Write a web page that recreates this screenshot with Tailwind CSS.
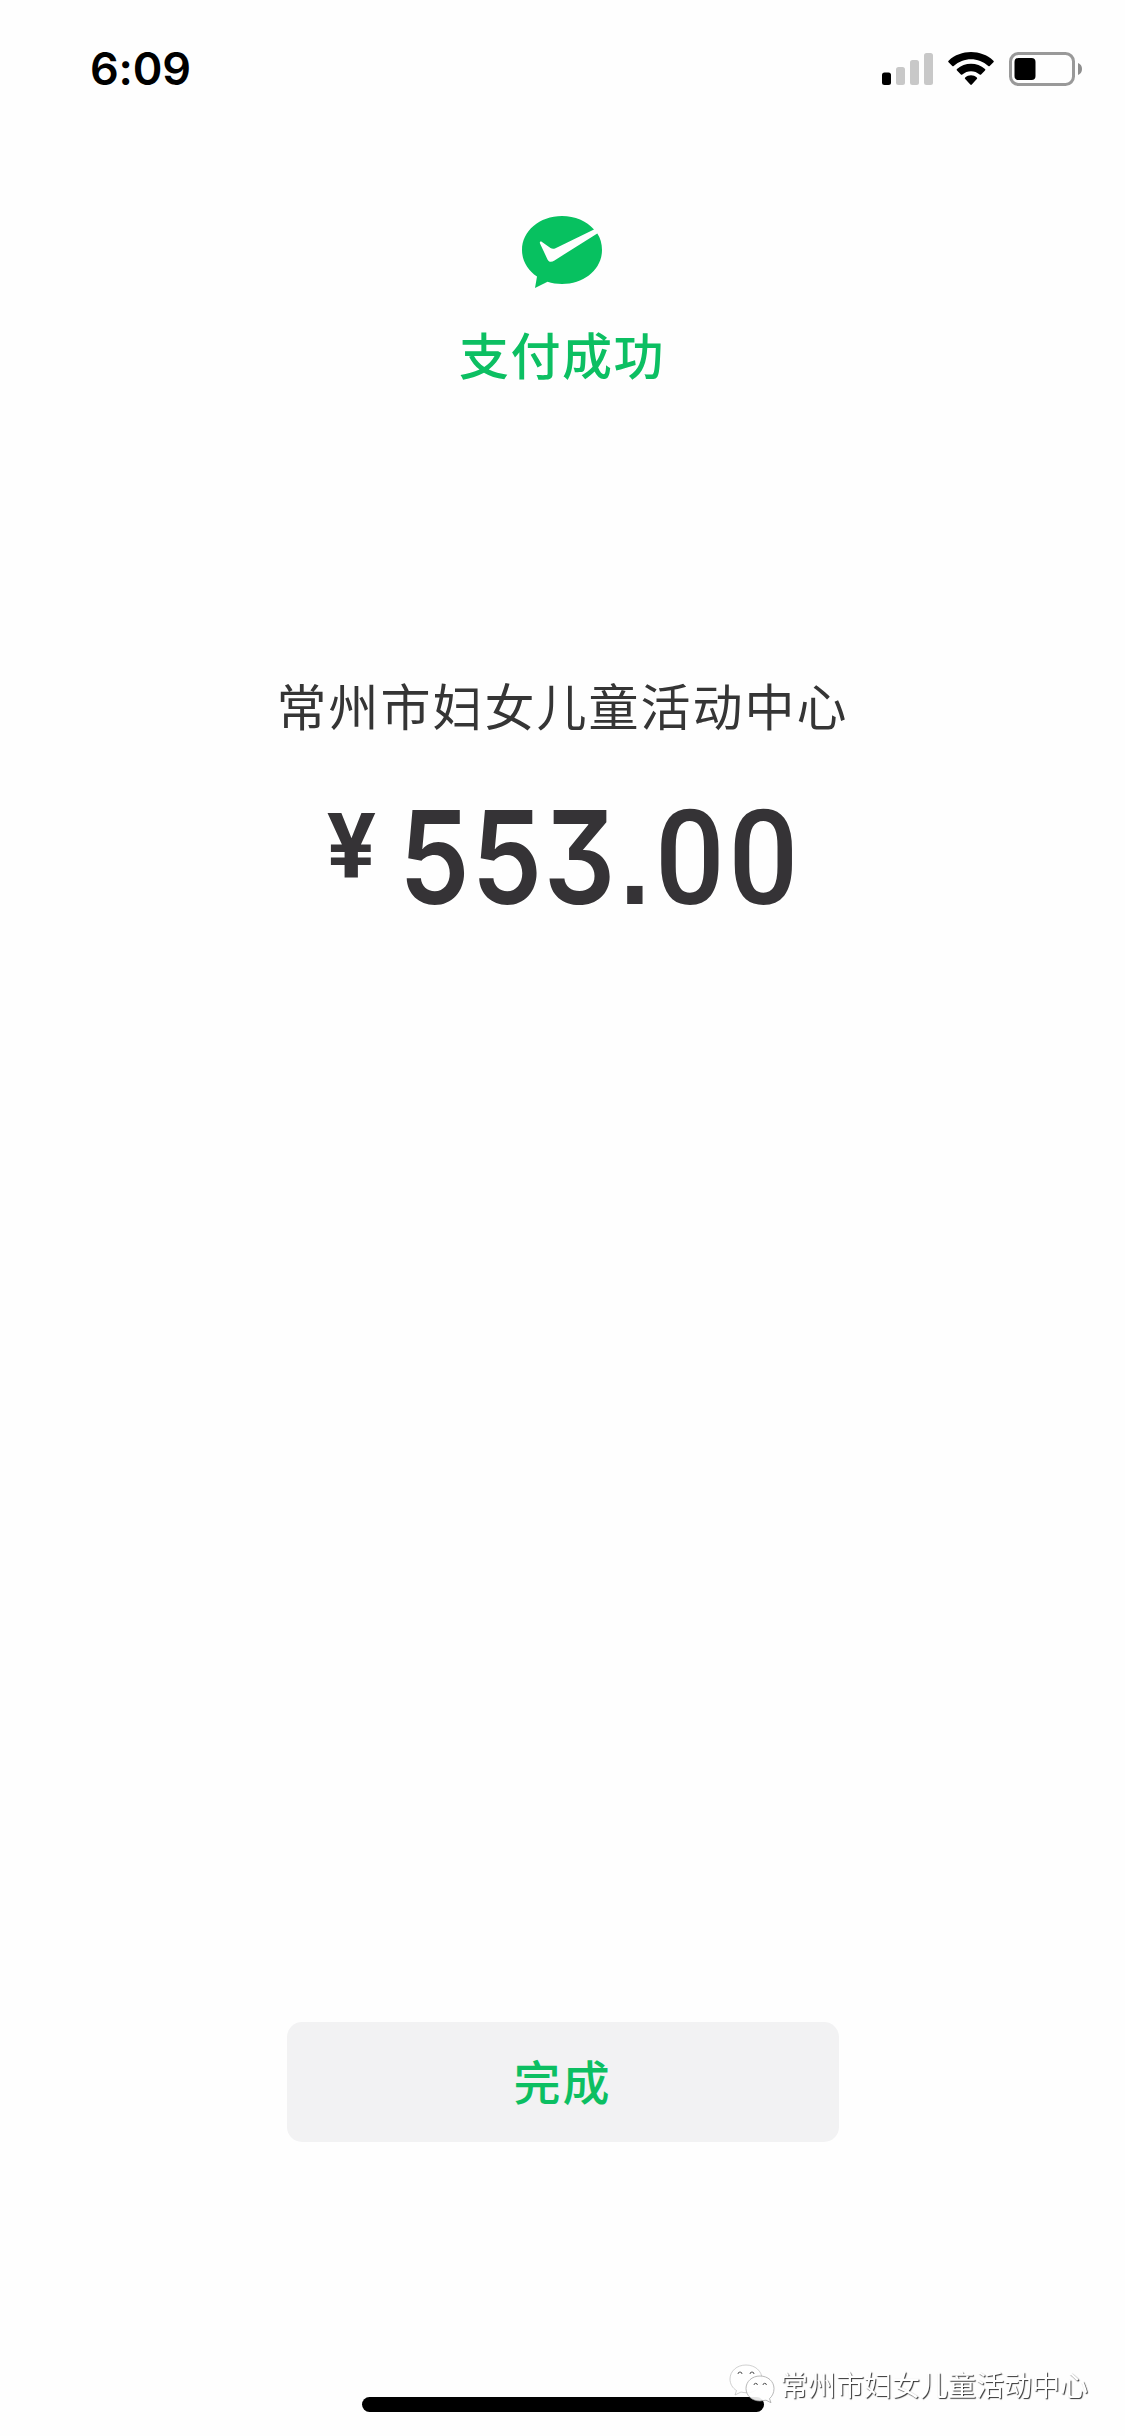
<!DOCTYPE html>
<html lang="zh-CN">
<head>
<meta charset="utf-8">
<title>支付成功</title>
<script src="https://cdn.jsdelivr.net/npm/@tailwindcss/browser@4"></script>
</head>
<body class="bg-[#fefefe]">
<div class="relative flex h-[2436px] w-[1125px] flex-col items-center overflow-hidden bg-[#fefefe] font-['Noto_Sans_CJK_SC',sans-serif]">
  <header class="flex h-[138px] w-full items-center justify-between pr-[42px] pl-[90px]">
    <span class="-mt-px font-['Inter',sans-serif] text-[45px] leading-none font-semibold tracking-[-0.2px] text-black">6:09</span>
    <div class="flex items-center">
      <svg class="h-[34px] w-[52px]" viewBox="0 0 52 34">
        <rect x="0" y="20.5" width="9" height="12.5" rx="2.5" fill="#000"/>
        <rect x="14" y="15" width="9" height="18" rx="2.5" fill="#c8c8c8"/>
        <rect x="28" y="8" width="9" height="25" rx="2.5" fill="#c8c8c8"/>
        <rect x="42" y="1" width="9" height="32" rx="2.5" fill="#c8c8c8"/>
      </svg>
      <svg class="ml-[14px] h-[34px] w-[46px]" viewBox="0 0 46 34" fill="#000">
        <path d="M.6 10.2a1 1 0 0 1 0-1.5C13-2.800 33-2.800 45.400 8.700a1 1 0 0 1 0 1.500L41.700 14a1 1 0 0 1-1.400 0C30.500 5 15.500 5 5.700 14a1 1 0 0 1-1.400 0z"/>
        <path d="M9 18.600a1 1 0 0 1 0-1.500C16.800 10 29.200 10 37 17.100a1 1 0 0 1 0 1.500l-3.900 3.900a1 1 0 0 1-1.400 0c-5-4.500-12.400-4.500-17.400 0a1 1 0 0 1-1.400 0z"/>
        <path d="M17.200 27a1 1 0 0 1 0-1.500c3.300-2.900 8.300-2.900 11.600 0a1 1 0 0 1 0 1.500l-5 5.600a1 1 0 0 1-1.500 0z"/>
      </svg>
      <svg class="ml-[15px] h-[34px] w-[74px]" viewBox="0 0 74 34">
        <rect x="1.500" y="1.500" width="63" height="31" rx="8" fill="none" stroke="#999" stroke-width="3"/>
        <rect x="5.500" y="6" width="21" height="22" rx="4" fill="#000"/>
        <path d="M69 11v12c2.600-1 4-3.300 4-6s-1.400-5-4-6z" fill="#8e8e8e"/>
      </svg>
    </div>
  </header>

  <main class="flex w-full flex-1 flex-col items-center">
    <svg class="mt-[77px] mr-[2px] h-[74px] w-[82px]" viewBox="0 0 82 74">
      <path d="M41 1C18.500 1 1 16 1 35c0 11 6 20.500 15 26.500L14 73l12.500-6.200C31 68.300 36 69 41 69c22.500 0 40-15 40-34 0-6.200-1.700-12-4.700-16.500L33.500 45.400c-3 2-5.500 2-7-1L19 28.500c-.6-1.800.6-2.600 2-1.600l8.500 6c1.500 1 3 1.100 5 .3L73 14.500C65.500 6 54 1 41 1z" fill="#07c160"/>
    </svg>
    <h1 class="mt-[28px] mr-[1px] text-[50px] leading-[72px] font-medium tracking-[1.500px] text-[#0cbf62]">支付成功</h1>
    <p class="mt-[279px] text-[50px] leading-[72px] tracking-[2px] text-[#353535]">常州市妇女儿童活动中心</p>
    <div class="mt-[45px] ml-[327px] flex h-[120px] items-start self-start text-[#353336]">
      <span class="mt-[9px] w-[72px] font-['Roboto',sans-serif] text-[91px] leading-[107px] font-bold">¥</span>
      <div class="-mt-[6px] flex items-baseline">
        <span class="w-[219px] origin-left scale-x-[0.87] font-['Inter',sans-serif] text-[129px] leading-[156px] font-[560] [font-feature-settings:'cv09','tnum']">553</span>
        <span class="w-[37px] origin-left scale-x-[0.82] font-['Inter',sans-serif] text-[129px] leading-[156px] font-[560] [font-feature-settings:'ss07']">.</span>
        <span class="w-[146px] origin-left scale-x-[0.93] font-['Roboto',sans-serif] text-[132px] leading-[140px] font-medium tracking-[4px]">00</span>
      </div>
    </div>
  </main>

  <button class="mb-[255px] flex h-[120px] w-[552px] shrink-0 items-center justify-center rounded-[15px] bg-[#f2f2f3] text-[#0cbf62]">
    <span class="-mt-[6px] text-[47px] leading-none font-medium tracking-[2px]">完成</span>
  </button>
  <div class="mb-[24px] h-[15px] w-[402px] shrink-0 rounded-full bg-black"></div>

  <div class="absolute top-[2363px] left-[729px] flex items-center gap-[5px]">
    <svg class="h-[42px] w-[46px]" viewBox="0 0 46 42" fill="#fff" fill-opacity=".9" stroke="#999" stroke-width=".7">
      <path d="M17 2C8 2 1 8 1 16c0 5 2.500 9 6.500 11.500L6 32l6-3c4 1 8 1 11 0 6-2 10-7 10-13C33 8 26 2 17 2z" stroke="#bbb"/>
      <path d="M31 13c-8 0-14 5.500-14 12.500S23 38 31 38l6-.8 5 2.500-1.500-4C43.500 33 45 29.500 45 25.500 45 18.500 39 13 31 13z"/>
      <path d="M9 11a2 2 0 0 1 4 0M21 11a2 2 0 0 1 4 0M25 22a1.700 1.700 0 0 1 3.400 0M34 22a1.700 1.700 0 0 1 3.400 0" fill="none" stroke="#555" stroke-width="1"/>
    </svg>
    <span class="text-[28px] leading-[42px] text-white [text-shadow:1px_1px_1px_#333] will-change-transform">常州市妇女儿童活动中心</span>
  </div>
</div>
</body>
</html>
